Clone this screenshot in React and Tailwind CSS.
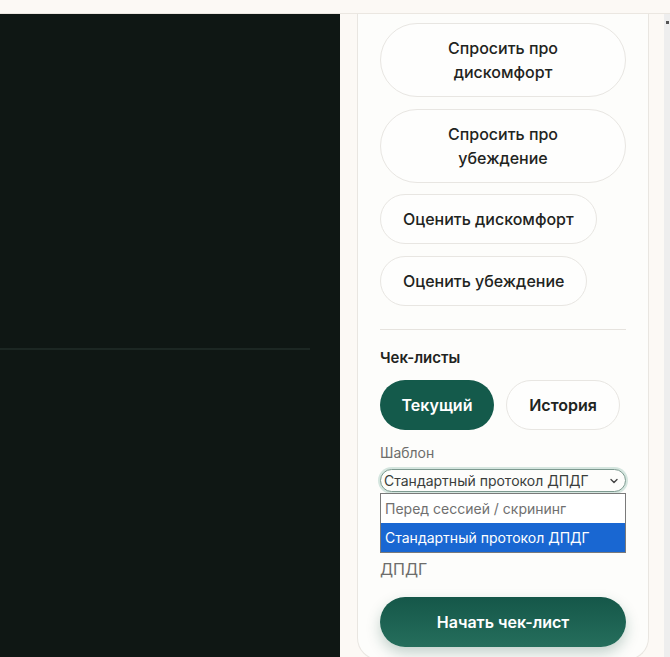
import React from "react";

function Pill({ children, className = "" }) {
  return (
    <button
      className={
        "rounded-full border border-[#e8e6e2] bg-[#fefefd] px-[22px] py-[12px] text-[16px] leading-[24px] font-medium text-[#1f2421] text-center " +
        className
      }
    >
      {children}
    </button>
  );
}

export default function App() {
  return (
    <div className="h-[657px] w-[670px] overflow-hidden flex flex-col bg-[#fcf9f5] font-['Inter',sans-serif]">
      <div className="h-[14px] shrink-0 border-b border-[#ebe7e1]" />
      <div className="flex flex-1 min-h-0">
        <div className="w-[340px] shrink-0 bg-[#0f1714] flex flex-col">
          <div className="h-[334px]" />
          <div className="h-[2px] w-[310px] bg-[#1c2723]" />
        </div>
        <div className="relative flex-1 min-w-0 pl-[17px]">
          <div className="w-[292px] rounded-b-[22px] border-x border-b border-[#e9e6e1] bg-[#fdfdfb] px-[22px] pt-[9px] pb-[12px] flex flex-col items-start">
            <Pill className="w-full">
              Спросить про
              <br />
              дискомфорт
            </Pill>
            <Pill className="w-full mt-[12px]">
              Спросить про
              <br />
              убеждение
            </Pill>
            <Pill className="mt-[11px]">Оценить дискомфорт</Pill>
            <Pill className="mt-[12px]">Оценить убеждение</Pill>
            <div className="mt-[23px] h-px w-full bg-[#e6e3de]" />
            <div className="mt-[16px] text-[15px] leading-[24px] font-semibold text-[#1f2421]">
              Чек-листы
            </div>
            <div className="mt-[10px] flex gap-[12px]">
              <button className="h-[50px] w-[114px] rounded-full bg-[#145a4b] text-[16px] font-semibold text-white">
                Текущий
              </button>
              <button className="h-[50px] w-[114px] rounded-full border border-[#e8e6e2] bg-[#fefefd] text-[16px] font-semibold text-[#1f2421]">
                История
              </button>
            </div>
            <div className="mt-[13px] text-[14px] leading-[20px] text-[#6d6d6b]">
              Шаблон
            </div>
            <div className="relative mt-[6px] w-full">
              <div className="flex h-[23px] w-full items-center justify-between rounded-full border border-[#7d9a90] pl-[3px] pr-[6px] ring-2 ring-[#d5e6df] bg-[#fdfdfb]">
                <span className="whitespace-nowrap text-[14px] leading-[20px] text-[#3a3d3b]">
                  Стандартный протокол ДПДГ
                </span>
                <svg width="10" height="10" viewBox="0 0 10 10" fill="none">
                  <path d="M2 3.5 L5 6.5 L8 3.5" stroke="#444" strokeWidth="1.4" strokeLinecap="round" strokeLinejoin="round" />
                </svg>
              </div>
              <div className="absolute left-0 top-[24px] z-10 w-full border border-[#7a7a7a] bg-white">
                <div className="h-[29px] flex items-center pl-[4px] whitespace-nowrap text-[14px] text-[#6f6f6f]">
                  Перед сессией / скрининг
                </div>
                <div className="h-[29px] flex items-center pl-[4px] whitespace-nowrap text-[14px] text-white bg-[#1967d2]">
                  Стандартный протокол ДПДГ
                </div>
              </div>
            </div>
            <p className="mt-[40px] w-full text-[16px] leading-[25px] text-[#6d6d6b]">
              Полный стандартный протокол ДПДГ
            </p>
            <button className="mt-[15px] h-[50px] w-full rounded-full bg-gradient-to-b from-[#155749] to-[#256e5c] text-[16px] font-semibold text-white shadow-[0_6px_14px_rgba(20,80,65,0.25)]">
              Начать чек-лист
            </button>
          </div>
          <div className="absolute right-0 top-0 bottom-0 w-[6px] bg-[#eeeeee] flex justify-center pt-[7px]">
            <div className="h-[3px] w-[3px] bg-[#555]" />
          </div>
        </div>
      </div>
    </div>
  );
}
